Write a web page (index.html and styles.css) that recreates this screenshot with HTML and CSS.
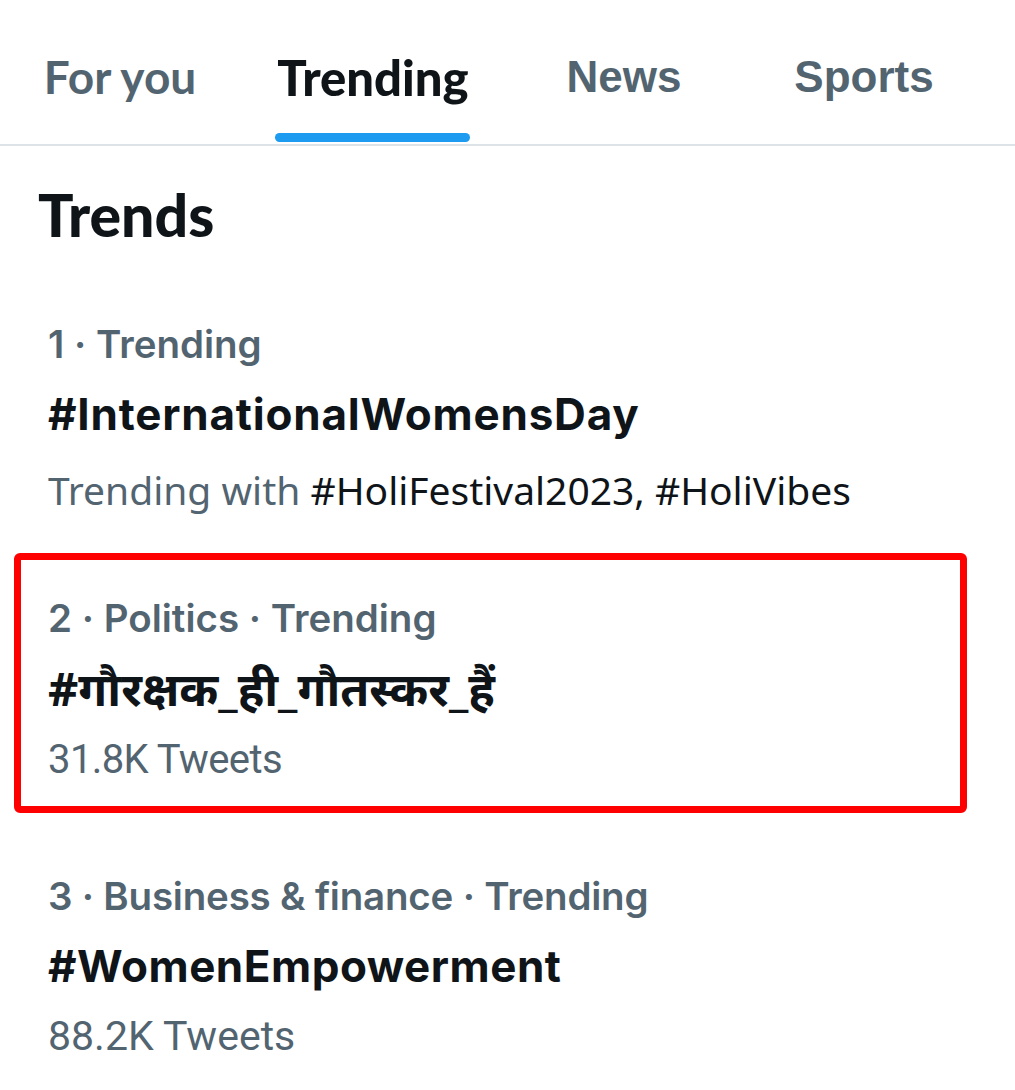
FILE: index.html
```html
<!DOCTYPE html>
<html>
<head>
<meta charset="utf-8">
<link rel="stylesheet" href="styles.css">
</head>
<body>
<div class="page">
  <nav class="tabs">
    <div class="tab t1"><span class="label">For you</span></div>
    <div class="tab t2 active"><span class="label">Trending<span class="bar"></span></span></div>
    <div class="tab t3"><span class="label alt">News</span></div>
    <div class="tab t4"><span class="label alt">Sports</span></div>
  </nav>
  <h1 class="title">Trends</h1>
  <section class="trend first">
    <div class="meta">1 · Trending</div>
    <div class="tag">#InternationalWomensDay</div>
    <div class="sub">Trending with <span class="dark">#HoliFestival2023, #HoliVibes</span></div>
  </section>
  <section class="trend boxed">
    <div class="meta">2 · Politics · Trending</div>
    <div class="tag hindi">#गौरक्षक_ही_गौतस्कर_हैं</div>
    <div class="count narrow">31.8K Tweets</div>
  </section>
  <section class="trend third">
    <div class="meta">3 · Business &amp; finance · Trending</div>
    <div class="tag">#WomenEmpowerment</div>
    <div class="count">88.2K Tweets</div>
  </section>
</div>
</body>
</html>
```
FILE: styles.css
```css
* { box-sizing: border-box; }
html, body { margin: 0; padding: 0; background: #fff; }
body { font-family: Lato, "Noto Sans", sans-serif; color: #0f1419; }
.page { width: 1015px; height: 1090px; overflow: hidden; }

.tabs {
  display: grid;
  grid-template-columns: 240px 266px 236px 244px;
  height: 146px;
  border-bottom: 2px solid #dde3e6;
}
.tab { display: flex; justify-content: center; align-items: flex-start; padding-top: 50px; }
.label {
  position: relative;
  display: inline-block;
  font-size: 46px;
  line-height: 54px;
  font-weight: 700;
  color: #536471;
  padding: 0 1px;
}
.label.alt { font-family: "Liberation Sans", Arial, sans-serif; font-size: 44px; }
.active .label { color: #0f1419; font-weight: 900; font-size: 49px; }
.bar {
  position: absolute;
  left: -1px; right: 0;
  top: 83px;
  height: 9px;
  border-radius: 5px;
  background: #1d9bf0;
}

.title {
  margin: 0;
  padding: 0 0 0 38px;
  height: 176px;
  padding-top: 35px;
  font-size: 59px;
  line-height: 68px;
  font-weight: 900;
  color: #0f1419;
}

.trend { padding-left: 48px; }
.meta { font-family: Inter, sans-serif; font-size: 38.5px; line-height: 44px; font-weight: 600; color: #536471; }
.third .meta { letter-spacing: -0.2px; }
.tag { font-family: Inter, sans-serif; font-size: 44px; line-height: 52px; font-weight: 700; color: #0f1419; margin-top: 22px; letter-spacing: 0.8px; }
.third .tag { letter-spacing: 0.5px; }
.sub { font-family: "Noto Sans", sans-serif; font-size: 39px; line-height: 48px; color: #536471; margin-top: 26px; }
.sub .dark { color: #0f1419; }
.count { font-family: Roboto, sans-serif; font-size: 41px; line-height: 48px; color: #536471; margin-top: 20px; }
.count.narrow { font-size: 40px; letter-spacing: -0.6px; margin-top: 22px; }

.boxed {
  margin: 39px 48px 0 14px;
  width: 953px;
  height: 260px;
  border: 7px solid #ff0000;
  border-radius: 6px;
  padding: 36px 0 0 27px;
}
.hindi { font-family: "Noto Sans", "Lohit Devanagari", "FreeSans", sans-serif; font-size: 47px; letter-spacing: 0; }
.third { margin-top: 61px; }
```
